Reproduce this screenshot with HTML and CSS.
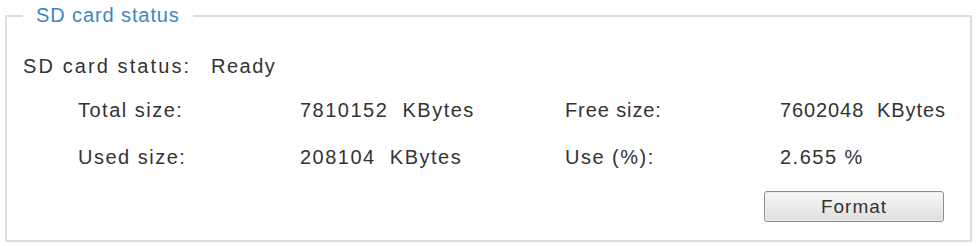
FILE: index.html
```html
<!DOCTYPE html>
<html>
<head>
<meta charset="utf-8">
<link rel="stylesheet" href="styles.css">
</head>
<body>
<fieldset class="panel">
  <legend class="panel-title">SD card status</legend>
  <div class="status-row">
    <span class="status-label">SD card status:</span>
    <span class="status-value">Ready</span>
  </div>
  <div class="sizes">
    <span>Total size:</span>
    <span>7810152&nbsp; KBytes</span>
    <span class="narrow">Free size:</span>
    <span class="narrow">7602048&nbsp; KBytes</span>
    <span>Used size:</span>
    <span>208104&nbsp; KBytes</span>
    <span>Use (%):</span>
    <span>2.655 %</span>
  </div>
  <div class="actions">
    <button class="btn">Format</button>
  </div>
</fieldset>
</body>
</html>
```
FILE: styles.css
```css
html, body {
  margin: 0;
  padding: 0;
  background: #ffffff;
}
body {
  width: 976px;
  height: 246px;
  font-family: "Liberation Sans", Arial, sans-serif;
  color: #333333;
  font-size: 20px;
  letter-spacing: 1.5px;
}
.panel {
  margin: 4px 4px 0 5px;
  padding: 0 0 0 16px;
  border: 2px solid #dedede;
  height: 238px;
  box-sizing: border-box;
}
.panel-title {
  color: #3c86c6;
  font-size: 20px;
  letter-spacing: 0.9px;
  padding: 0 13px;
  margin-left: 0;
}
.status-row {
  display: flex;
  margin-top: 27px;
  height: 24px;
  align-items: center;
}
.status-label {
  width: 188px;
  letter-spacing: 2.1px;
}
.sizes {
  display: grid;
  grid-template-columns: 222px 265px 215px auto;
  row-gap: 23px;
  margin-top: 20px;
  margin-left: 55px;
  line-height: 24px;
}
.narrow {
  letter-spacing: 0.9px;
}
.actions {
  display: flex;
  justify-content: flex-end;
  margin-top: 22px;
  padding-right: 26px;
}
.btn {
  width: 180px;
  height: 31px;
  font-family: "Liberation Sans", Arial, sans-serif;
  font-size: 19px;
  letter-spacing: 1px;
  color: #333;
  background: linear-gradient(#f8f8f8, #dedede);
  border: 1px solid #8e8e8e;
  border-radius: 3px;
  box-shadow: inset 0 0 0 1px #ececec;
}
```
